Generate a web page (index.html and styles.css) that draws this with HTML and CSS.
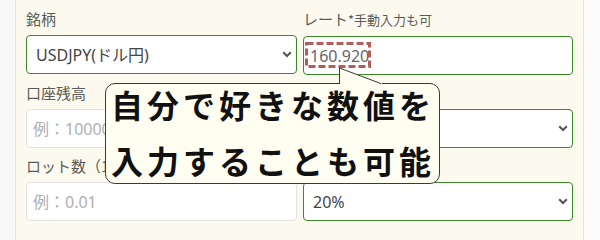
FILE: index.html
```html
<!DOCTYPE html>
<html lang="ja">
<head>
<meta charset="utf-8">
<title>ロット計算</title>
<link rel="stylesheet" href="styles.css">
</head>
<body>
<div class="page">
  <div class="gutter"></div>
  <main class="panel">
    <div class="form">
      <div class="field">
        <label class="label">銘柄</label>
        <div class="wrap">
          <select class="control select valid"><option>USDJPY(ドル円)</option></select>
          <svg class="chev" width="10" height="7" viewBox="0 0 10 7"><polyline points="1.2,1.2 5,5 8.8,1.2" fill="none" stroke="#555" stroke-width="2"/></svg>
        </div>
      </div>
      <div class="field">
        <label class="label">レート<span class="note">*手動入力も可</span></label>
        <div class="wrap">
          <input class="control input valid rate" type="text" value="160.920">
          <svg class="mark" width="66" height="26" viewBox="0 0 66 26"><rect x="1.5" y="1.5" width="63" height="23" fill="none" stroke="#b35d5b" stroke-width="3" stroke-dasharray="7 3"/></svg>
        </div>
      </div>
      <div class="field">
        <label class="label">口座残高</label>
        <div class="wrap">
          <input class="control input plain" type="text" placeholder="例：1000000">
        </div>
      </div>
      <div class="field">
        <label class="label">口座通貨</label>
        <div class="wrap">
          <select class="control select valid"><option>JPY(円)</option></select>
          <svg class="chev" width="10" height="7" viewBox="0 0 10 7"><polyline points="1.2,1.2 5,5 8.8,1.2" fill="none" stroke="#555" stroke-width="2"/></svg>
        </div>
      </div>
      <div class="field">
        <label class="label">ロット数（1ロット=1000通貨）</label>
        <div class="wrap">
          <input class="control input plain" type="text" placeholder="例：0.01">
        </div>
      </div>
      <div class="field">
        <label class="label">損失許容率</label>
        <div class="wrap">
          <select class="control select valid"><option>20%</option></select>
          <svg class="chev" width="10" height="7" viewBox="0 0 10 7"><polyline points="1.2,1.2 5,5 8.8,1.2" fill="none" stroke="#555" stroke-width="2"/></svg>
        </div>
      </div>
    </div>
    <div class="callout">
      <div class="callout-line">自分で好きな数値を</div>
      <div class="callout-line">入力することも可能</div>
    </div>
    <svg class="tail" width="46" height="19" viewBox="0 0 46 19"><polygon points="1.5,1 1.5,18 44,18 44,16.6" fill="#fffef1"/><polyline points="1.5,17 1.5,1 43,16.6" fill="none" stroke="#3a3a3a" stroke-width="1"/></svg>
  </main>
  <div class="rest"></div>
</div>
</body>
</html>
```

FILE: styles.css
```css
html, body {
  margin: 0;
  padding: 0;
  height: 100%;
  overflow: hidden;
}

body {
  background: #f8f8f8;
  font-family: "Noto Sans", "Noto Sans CJK JP", sans-serif;
}

.page {
  display: flex;
  height: 100%;
}

.gutter {
  width: 15px;
  flex: none;
  background: #f8f8f8;
}

.panel {
  position: relative;
  flex: none;
  width: 569px;
  box-sizing: border-box;
  padding: 9px 10px 0 10px;
  background: #fcfaee;
  border-left: 1px solid #e6e4dc;
  border-right: 1px solid #e6e4dc;
}

.rest {
  flex: 1;
  background: #fbfbfb;
}

.form {
  display: grid;
  grid-template-columns: 271px 270px;
  column-gap: 6px;
  row-gap: 8px;
}

.field {
  display: flex;
  flex-direction: column;
  gap: 6px;
}

.label {
  font-family: "Noto Sans CJK JP", sans-serif;
  font-size: 15px;
  line-height: 20px;
  color: #5a5a5a;
  white-space: nowrap;
}

.note {
  font-size: 13px;
}

.wrap {
  position: relative;
}

.control {
  display: block;
  width: 100%;
  height: 39px;
  box-sizing: border-box;
  margin: 0;
  border-radius: 4px;
  background: #fff;
  font-family: "Noto Sans", "Noto Sans CJK JP", sans-serif;
  font-size: 16px;
  outline: none;
}

.valid {
  border: 1px solid #3b8a2a;
}

.plain {
  border: 1px solid #e2e2e2;
}

.select {
  appearance: none;
  -webkit-appearance: none;
  padding: 0 24px 0 9px;
  color: #444;
}

.input {
  padding: 0 6px;
  color: #666;
}

.input::placeholder {
  color: #b0b0b0;
}

.chev {
  position: absolute;
  right: 5px;
  top: 16px;
}

.mark {
  position: absolute;
  left: 2px;
  top: 6px;
}

.callout {
  position: absolute;
  left: 89px;
  top: 83px;
  width: 335px;
  height: 101px;
  box-sizing: border-box;
  padding: 0 0 0 5px;
  background: #fffef1;
  border: 1px solid #3a3a3a;
  border-radius: 10px;
  display: flex;
  flex-direction: column;
  gap: 16px;
  z-index: 2;
}

.callout-line {
  font-family: "Noto Sans CJK JP", sans-serif;
  font-weight: 700;
  font-size: 32px;
  line-height: 40px;
  letter-spacing: 4px;
  color: #111;
  white-space: nowrap;
}

.tail {
  position: absolute;
  left: 322px;
  top: 67px;
  z-index: 3;
}
```
